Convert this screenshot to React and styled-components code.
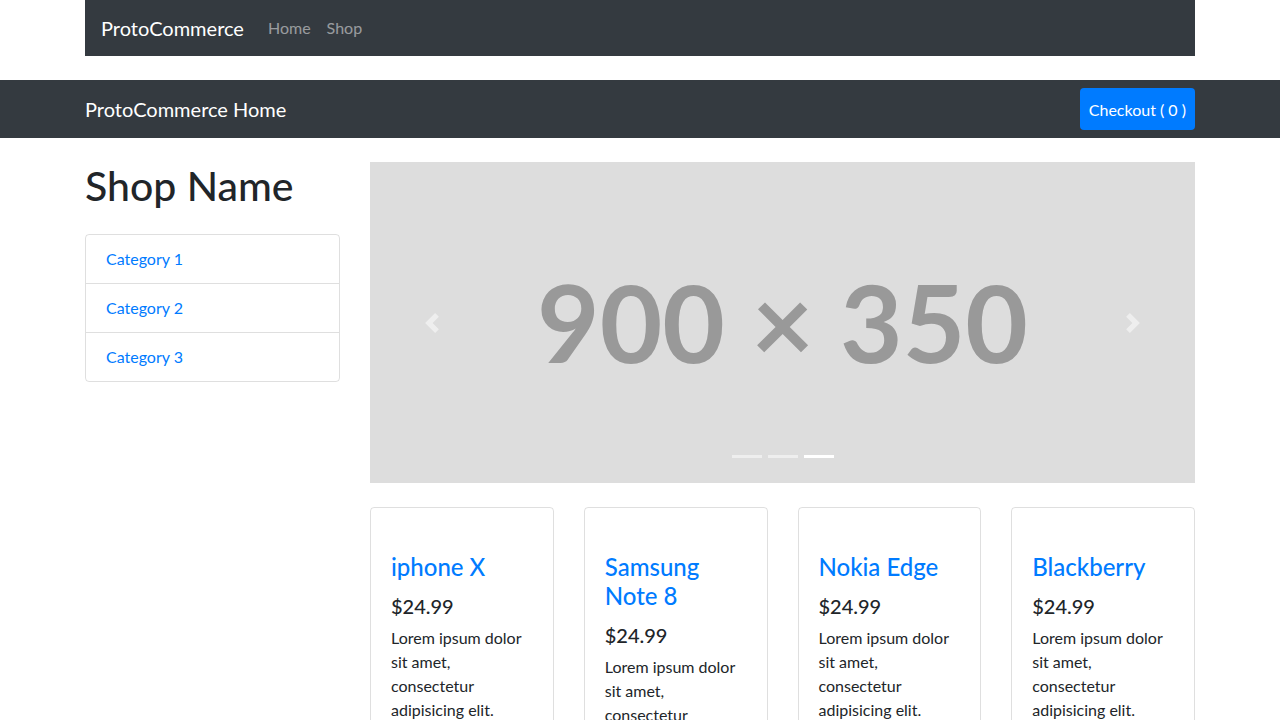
import React from "react";
import styled, { createGlobalStyle } from "styled-components";

const GlobalStyle = createGlobalStyle`
  body {
    margin: 0;
    font-family: Lato, "Open Sans", sans-serif;
    font-size: 16px;
    line-height: 1.5;
    color: #212529;
    background: #fff;
  }
  * { box-sizing: border-box; }
`;

const Container = styled.div`
  width: 1110px;
  margin: 0 auto;
`;

const TopNav = styled.nav`
  height: 56px;
  background: #343a40;
  display: flex;
  align-items: center;
  padding: 0 16px;
`;

const Brand = styled.a`
  font-size: 20px;
  color: #fff;
  text-decoration: none;
  margin-right: 16px;
`;

const NavLink = styled.a`
  color: rgba(255, 255, 255, 0.5);
  text-decoration: none;
  padding: 0 8px;
`;

const SubNav = styled.nav`
  margin-top: 24px;
  height: 58px;
  background: #343a40;
`;

const SubNavInner = styled(Container)`
  height: 100%;
  display: flex;
  align-items: center;
  justify-content: space-between;
`;

const CheckoutButton = styled.button`
  height: 42px;
  padding: 0 9px;
  border: none;
  border-radius: 4px;
  background: #007bff;
  color: #fff;
  font-family: inherit;
  font-size: 16px;
`;

const Main = styled(Container)`
  display: grid;
  grid-template-columns: 255px 825px;
  column-gap: 30px;
  padding-top: 24px;
`;

const Title = styled.h1`
  margin: 0 0 24px;
  font-size: 41px;
  font-weight: 500;
  line-height: 48px;
`;

const ListGroup = styled.div`
  border: 1px solid rgba(0, 0, 0, 0.125);
  border-radius: 4px;
`;

const ListItem = styled.a`
  display: block;
  padding: 12px 20px;
  color: #007bff;
  text-decoration: none;
  & + & {
    border-top: 1px solid rgba(0, 0, 0, 0.125);
  }
`;

const Carousel = styled.div`
  position: relative;
  height: 321px;
  background: #ddd;
  display: flex;
  align-items: center;
  justify-content: center;
`;

const PlaceholderText = styled.span`
  font-family: Lato, sans-serif;
  font-weight: 700;
  font-size: 108px;
  color: #999;
  line-height: 1;
  margin-top: -4px;
`;

const Control = styled.span`
  position: absolute;
  top: 0;
  bottom: 0;
  width: 15%;
  display: flex;
  align-items: center;
  justify-content: center;
  opacity: 0.5;
  ${(p) => (p.$side === "left" ? "left: 0;" : "right: 0;")}
`;

const Indicators = styled.div`
  position: absolute;
  bottom: 25px;
  left: 0;
  right: 0;
  display: flex;
  justify-content: center;
  gap: 6px;
`;

const Indicator = styled.span`
  width: 30px;
  height: 3px;
  background: ${(p) => (p.$active ? "#fff" : "rgba(255,255,255,0.5)")};
`;

const Cards = styled.div`
  grid-column: 2;
  margin-top: 24px;
  display: grid;
  grid-template-columns: repeat(4, 1fr);
  column-gap: 30px;
  align-items: start;
`;

const Card = styled.div`
  border: 1px solid rgba(0, 0, 0, 0.125);
  border-radius: 4px;
  padding-top: 25px;
`;

const CardBody = styled.div`
  padding: 20px;
`;

const CardTitle = styled.h4`
  margin: 0 0 12px;
  font-size: 24px;
  font-weight: 500;
  line-height: 1.2;
  color: #007bff;
`;

const Price = styled.h5`
  margin: 0 0 8px;
  font-size: 20px;
  font-weight: 500;
  line-height: 1.2;
`;

const CardText = styled.p`
  margin: 0;
`;

const Chevron = ({ dir }) => (
  <svg width="20" height="20" viewBox="0 0 8 8" fill="#fff">
    {dir === "left" ? (
      <path d="M5.25 0l-4 4 4 4 1.5-1.5-2.5-2.5 2.5-2.5-1.5-1.5z" />
    ) : (
      <path d="M2.75 0l-1.5 1.5 2.5 2.5-2.5 2.5 1.5 1.5 4-4-4-4z" />
    )}
  </svg>
);

const products = ["iphone X", "Samsung Note 8", "Nokia Edge", "Blackberry"];

export default function App() {
  return (
    <>
      <GlobalStyle />
      <Container>
        <TopNav>
          <Brand href="#">ProtoCommerce</Brand>
          <NavLink href="#">Home</NavLink>
          <NavLink href="#">Shop</NavLink>
        </TopNav>
      </Container>
      <SubNav>
        <SubNavInner>
          <Brand href="#">ProtoCommerce Home</Brand>
          <CheckoutButton>Checkout ( 0 )</CheckoutButton>
        </SubNavInner>
      </SubNav>
      <Main>
        <div>
          <Title>Shop Name</Title>
          <ListGroup>
            <ListItem href="#">Category 1</ListItem>
            <ListItem href="#">Category 2</ListItem>
            <ListItem href="#">Category 3</ListItem>
          </ListGroup>
        </div>
        <div>
          <Carousel>
            <PlaceholderText>900 × 350</PlaceholderText>
            <Control $side="left">
              <Chevron dir="left" />
            </Control>
            <Control $side="right">
              <Chevron dir="right" />
            </Control>
            <Indicators>
              <Indicator />
              <Indicator />
              <Indicator $active />
            </Indicators>
          </Carousel>
        </div>
        <Cards>
          {products.map((name) => (
            <Card key={name}>
              <CardBody>
                <CardTitle>{name}</CardTitle>
                <Price>$24.99</Price>
                <CardText>
                  Lorem ipsum dolor sit amet, consectetur adipisicing elit.
                  Amet numquam aspernatur!
                </CardText>
              </CardBody>
            </Card>
          ))}
        </Cards>
      </Main>
    </>
  );
}
